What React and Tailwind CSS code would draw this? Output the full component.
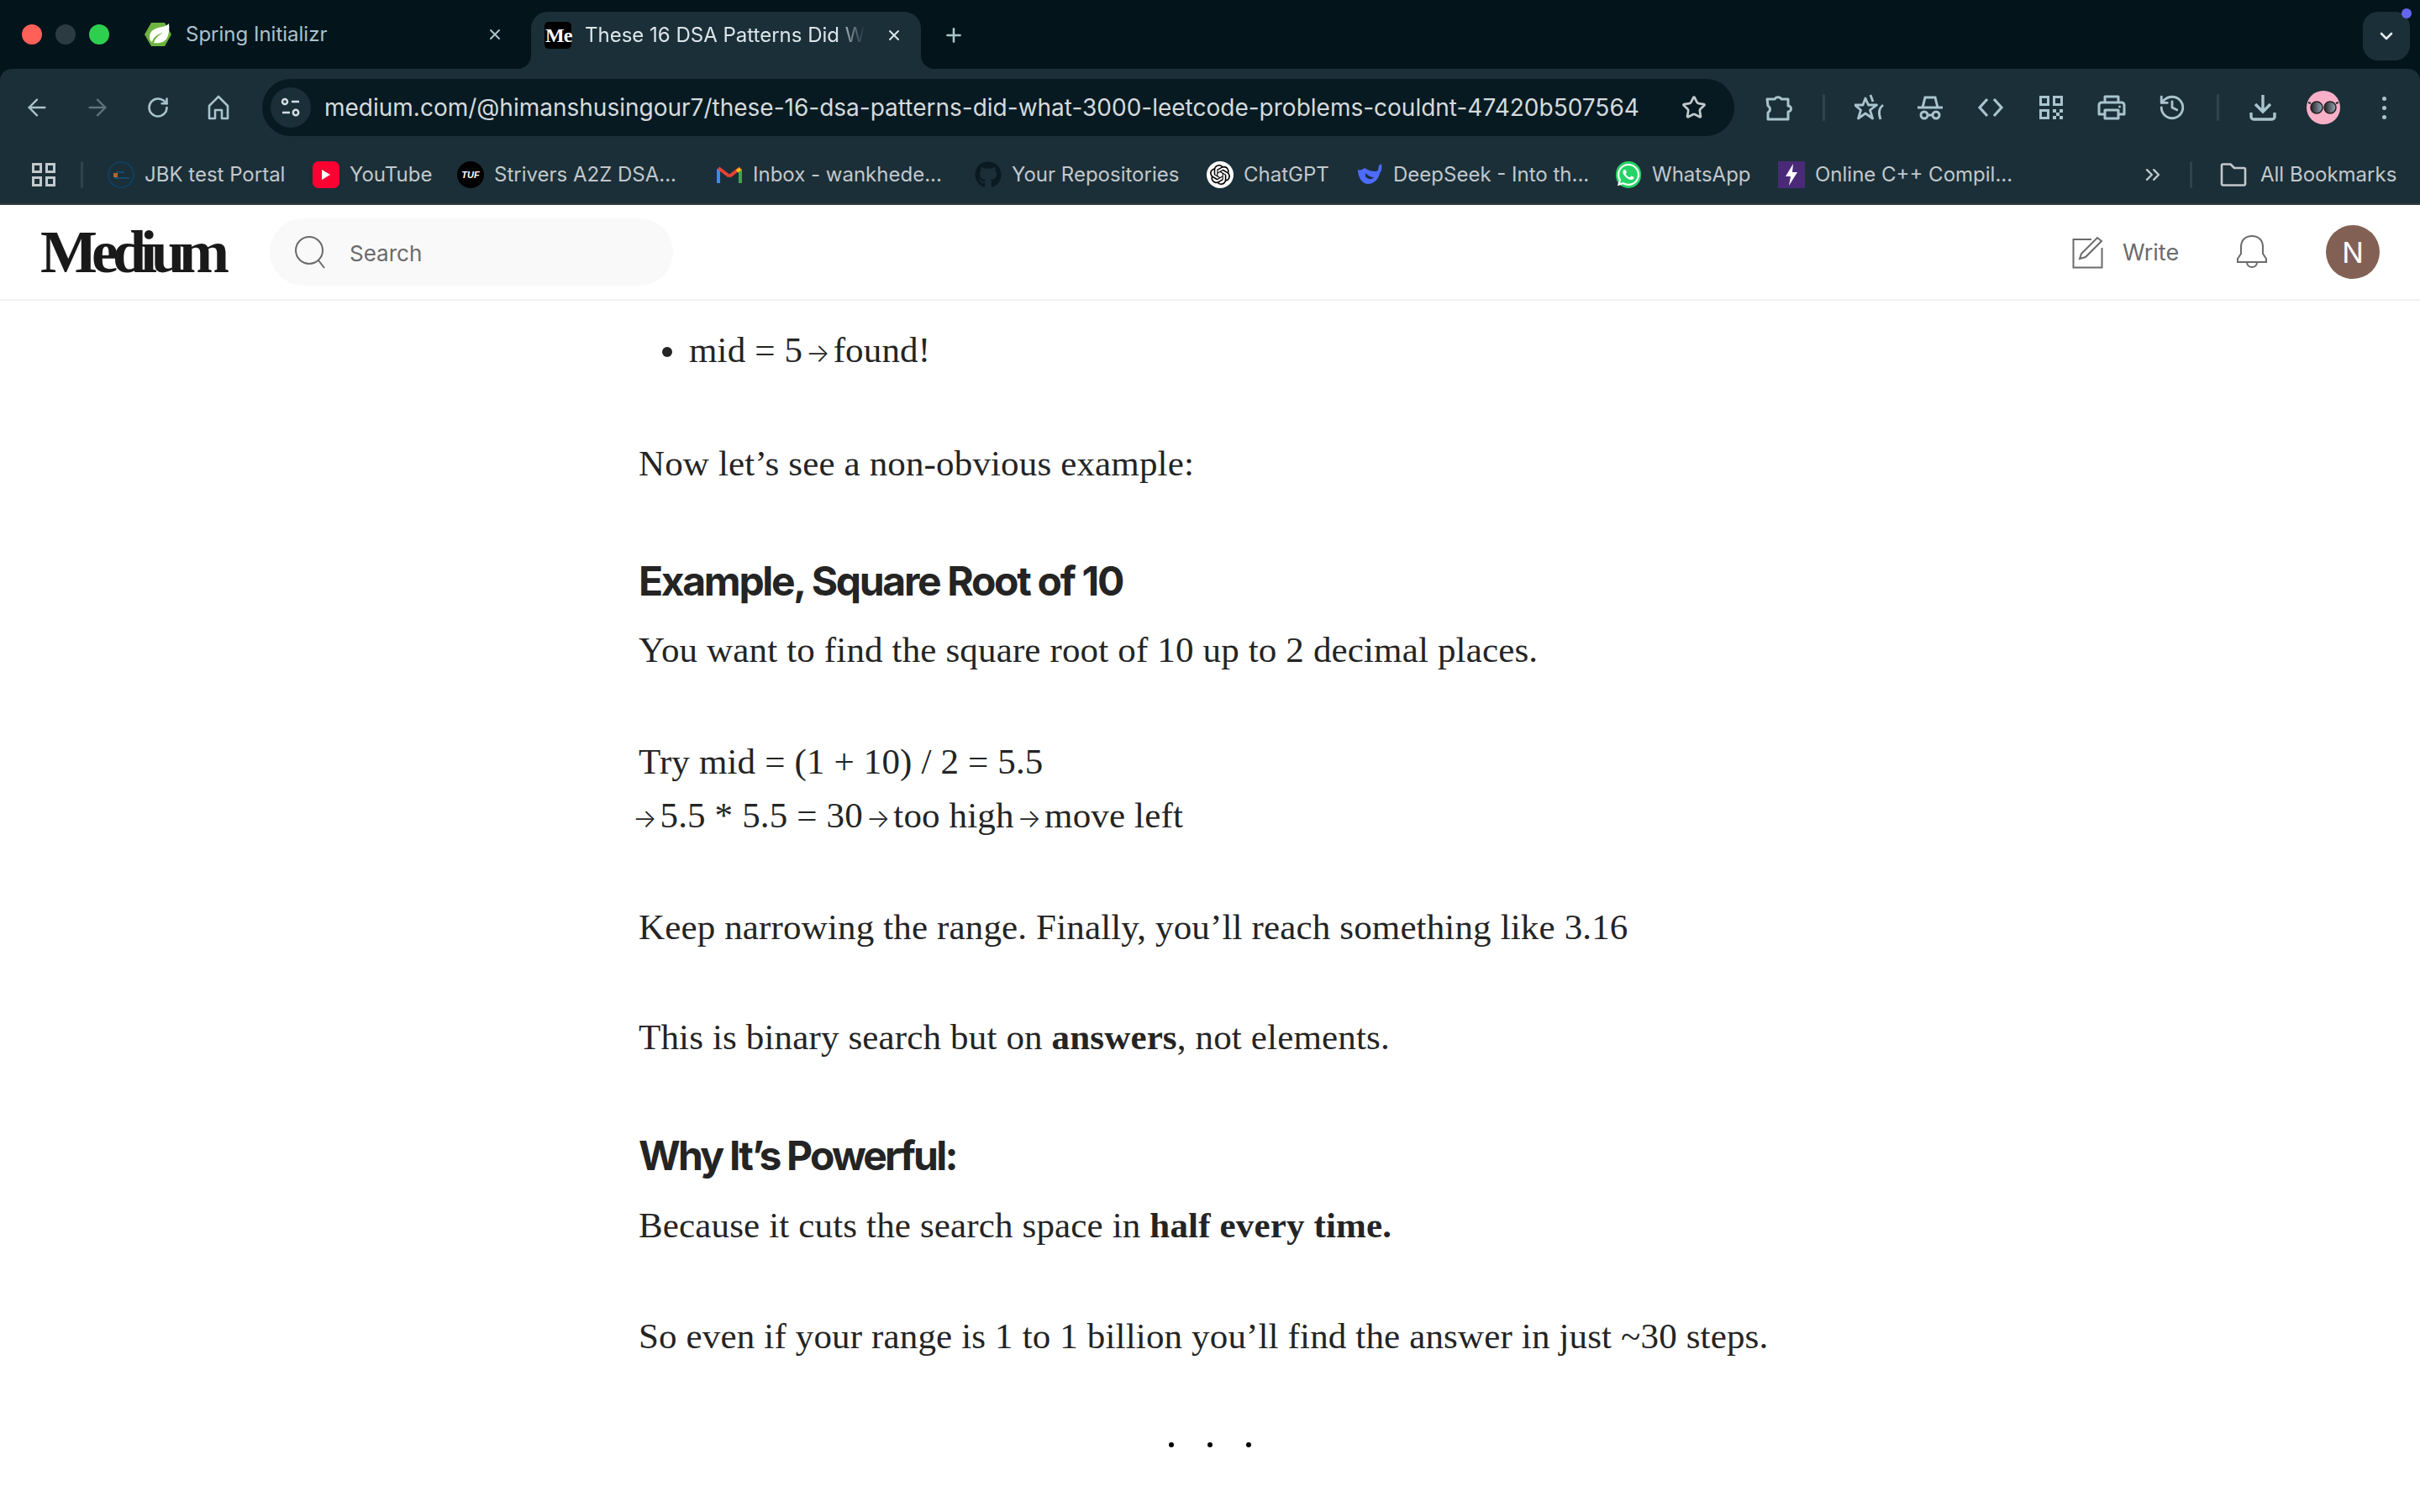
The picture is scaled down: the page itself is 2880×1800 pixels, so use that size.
import React from "react";
import { ArrowLeft, ArrowRight, RotateCw, History, Star, X, Plus, ChevronDown, ChevronsRight } from "lucide-react";
import { FaGithub, FaWhatsapp } from "react-icons/fa";
import { SiOpenai } from "react-icons/si";

const ICON = "#a9c4cc";

function Spring() {
  return (
    <svg width="32" height="30" viewBox="0 0 32 30">
      <path d="M8 1h16l8 14-8 14H8L0 15z" fill="#6db33f" />
      <path d="M29 2c-2 2-4 3-8 4C13 7 6 10 6 18c0 3 1 5 3 6 1-5 6-9 13-11-5 3-9 6-11 12 8 1 13-1 16-6 2-5 3-11 2-17z" fill="#fff" />
    </svg>
  );
}

function MediumFavicon() {
  return (
    <div className="w-[32px] h-[32px] bg-black rounded-[5px] flex items-center pl-[1px] shrink-0">
      <span className="font-['Liberation_Serif',serif] font-bold text-[24px] text-white tracking-[-1px] leading-none">Me</span>
    </div>
  );
}

function SiteSettings() {
  return (
    <svg width="24" height="26" viewBox="0 0 24 26" fill="none" stroke="#d3dde1" strokeWidth="2.5">
      <circle cx="5" cy="6" r="3" />
      <path d="M13 6h9M2 19h9" />
      <circle cx="18" cy="19" r="3.2" />
    </svg>
  );
}

function Home() {
  return (
    <svg width="28" height="30" viewBox="0 0 28 30" fill="none" stroke={ICON} strokeWidth="2.6" strokeLinejoin="round">
      <path d="M3 13 14 2l11 11v15h-7V18h-8v10H3z" />
    </svg>
  );
}

function Puzzle() {
  return (
    <svg width="32" height="32" viewBox="0 0 32 32" fill="none" stroke={ICON} strokeWidth="3" strokeLinejoin="round">
      <path d="M2 6h9a4.5 4 0 0 1 8 0h8v8a3.5 3.5 0 0 1 0 7v9H3v-8a4.5 4.5 0 0 0 0-8z" />
    </svg>
  );
}

function StarCascade() {
  return (
    <svg width="36" height="32" viewBox="0 0 36 32" fill="none" stroke={ICON} strokeWidth="2.8" strokeLinejoin="round">
      <path d="M13 5l3.5 8h10l-8 6 3 10-8.500-6-8.500 6 3-10-7-6h9.500z" />
      <path d="M19 1l3 8M34 13c-4 3-6 9-3 17" />
    </svg>
  );
}

function Incognito() {
  return (
    <svg width="30" height="30" viewBox="0 0 30 30" fill="none" stroke={ICON} strokeWidth="3">
      <path d="M6 15 9 3h12l3 12" />
      <path d="M0 15h30" />
      <circle cx="8" cy="24" r="4" />
      <circle cx="22" cy="24" r="4" />
      <path d="M12 24h6" />
    </svg>
  );
}

function Code() {
  return (
    <svg width="32" height="24" viewBox="0 0 32 24" fill="none" stroke={ICON} strokeWidth="3.2">
      <path d="M12 2 3 12l9 10M20 2l9 10-9 10" />
    </svg>
  );
}

function Qr() {
  return (
    <svg width="28" height="28" viewBox="0 0 28 28" fill="none" stroke={ICON} strokeWidth="3">
      <rect x="1.500" y="1.500" width="9" height="9" />
      <rect x="17.500" y="1.500" width="9" height="9" />
      <rect x="1.500" y="17.500" width="9" height="9" />
      <path d="M16 16h4v4h-4zM24 16h4v4h-4zM20 20h4v4h-4zM16 24h4v4h-4zM24 24h4v4h-4z" fill={ICON} stroke="none" />
    </svg>
  );
}

function Printer() {
  return (
    <svg width="34" height="30" viewBox="0 0 34 30" fill="none" stroke={ICON} strokeWidth="3" strokeLinejoin="round">
      <path d="M9 9V2h16v7" />
      <path d="M8 23H2V12a3 3 0 0 1 3-3h24a3 3 0 0 1 3 3v11h-6" />
      <rect x="9" y="18" width="16" height="10" />
      <circle cx="26.500" cy="14" r="1.500" fill={ICON} stroke="none" />
    </svg>
  );
}

function Download() {
  return (
    <svg width="32" height="32" viewBox="0 0 32 32" fill="none" stroke={ICON} strokeWidth="3.4">
      <path d="M16 1v19M7 12l9 9 9-9" />
      <path d="M2 22v5a3 3 0 0 0 3 3h22a3 3 0 0 0 3-3v-5" />
    </svg>
  );
}

function Shades() {
  return (
    <div className="w-[40px] h-[40px] rounded-full bg-[#f8b0c8] flex items-center justify-center">
      <svg width="36" height="18" viewBox="0 0 36 18">
        <defs>
          <linearGradient id="lens" x1="0" x2="1">
            <stop offset="0" stopColor="#222" />
            <stop offset="1" stopColor="#9ab" />
          </linearGradient>
        </defs>
        <path d="M0 3l3 1M33 4l3-1" stroke="#222" strokeWidth="2" />
        <circle cx="10" cy="9" r="7" fill="url(#lens)" stroke="#222" strokeWidth="1.500" />
        <circle cx="26" cy="9" r="7" fill="url(#lens)" stroke="#222" strokeWidth="1.500" />
      </svg>
    </div>
  );
}

function Dots() {
  return (
    <div className="flex flex-col gap-[6px]">
      <span className="w-[5px] h-[5px] rounded-full bg-[#a9c4cc]" />
      <span className="w-[5px] h-[5px] rounded-full bg-[#a9c4cc]" />
      <span className="w-[5px] h-[5px] rounded-full bg-[#a9c4cc]" />
    </div>
  );
}

function AppsGrid() {
  return (
    <svg width="28" height="28" viewBox="0 0 28 28" fill="none" stroke="#c2c8cb" strokeWidth="3">
      <rect x="1.500" y="1.500" width="9" height="9" />
      <rect x="17.500" y="1.500" width="9" height="9" />
      <rect x="1.500" y="17.500" width="9" height="9" />
      <rect x="17.500" y="17.500" width="9" height="9" />
    </svg>
  );
}

function Jbk() {
  return (
    <svg width="32" height="32" viewBox="0 0 32 32" fill="none">
      <circle cx="16" cy="16" r="15" stroke="#0f3f60" strokeWidth="2" />
      <path d="M10 13h10M8 20h18" stroke="#144a70" strokeWidth="2" />
      <rect x="7" y="14" width="5" height="5" fill="#b5652a" />
    </svg>
  );
}

function YouTube() {
  return (
    <div className="w-[32px] h-[32px] rounded-[7px] bg-[#ff0033] flex items-center justify-center">
      <svg width="12" height="14" viewBox="0 0 12 14"><path d="M1 1l10 6-10 6z" fill="#fff" /></svg>
    </div>
  );
}

function Tuf() {
  return (
    <div className="w-[32px] h-[32px] rounded-full bg-black flex items-center justify-center">
      <span className="font-['Liberation_Sans',sans-serif] italic font-bold text-[11px] text-white leading-none">TUF</span>
    </div>
  );
}

function Gmail() {
  return (
    <svg width="30" height="24" viewBox="0 0 30 24" fill="none">
      <path d="M2 22V5" stroke="#4285f4" strokeWidth="4" />
      <path d="M28 22V5" stroke="#34a853" strokeWidth="4" />
      <path d="M2 4l13 10" stroke="#ea4335" strokeWidth="4" />
      <path d="M15 14 28 4" stroke="#ea4335" strokeWidth="4" />
      <path d="M28 5l-4 3" stroke="#fbbc04" strokeWidth="4" />
    </svg>
  );
}

function DeepSeek() {
  return (
    <svg width="30" height="28" viewBox="0 0 30 28">
      <path d="M1 8c3 1 5 0 8-2 6 4 13 5 16 3l1-6 3-2c1 5 0 9-2 11-1 7-7 13-14 13C6 25 1 17 1 8z" fill="#4d6bfe" />
      <path d="M10 12c3 3 6 5 10 5-2 3-7 3-10-1z" fill="#1b2f38" />
    </svg>
  );
}

function Whatsapp() {
  return (
    <div className="w-[30px] h-[32px] rounded-full bg-[#25d366] flex items-center justify-center">
      <FaWhatsapp size={30} color="#fff" />
    </div>
  );
}

function OnlineCpp() {
  return (
    <div className="w-[32px] h-[32px] bg-[#4a2a78] flex items-center justify-center">
      <svg width="14" height="26" viewBox="0 0 14 26"><path d="M9 0 0 15h6l-2 11 10-16H8z" fill="#fff" /></svg>
    </div>
  );
}

function Folder() {
  return (
    <svg width="32" height="28" viewBox="0 0 32 28" fill="none" stroke="#c2c8cb" strokeWidth="2.6" strokeLinejoin="round">
      <path d="M2 3a1.500 1.500 0 0 1 1.500-1.500h9L17 6h11.500A1.500 1.500 0 0 1 30 7.500V25a1.500 1.500 0 0 1-1.500 1.500h-25A1.500 1.500 0 0 1 2 25z" />
    </svg>
  );
}

function Bookmark({ icon, label, width }) {
  return (
    <div className="flex items-center gap-[12px] shrink-0">
      <div className="w-[32px] h-[32px] flex items-center justify-center">{icon}</div>
      <span className={width}>{label}</span>
    </div>
  );
}

function ToolButton({ children }) {
  return <div className="w-[72px] h-[68px] flex items-center justify-center shrink-0">{children}</div>;
}

function Divider() {
  return <div className="w-[3px] h-[32px] rounded-full bg-[#2f444d] shrink-0" />;
}

function Browser() {
  return (
    <div className="bg-[#04141b] font-['Inter',sans-serif]">
      {/* tab strip */}
      <div className="h-[82px] flex items-start relative">
        <div className="flex gap-[16px] pl-[26px] pt-[29px] w-[172px]">
          <span className="w-[24px] h-[24px] rounded-full bg-[#ff6159]" />
          <span className="w-[24px] h-[24px] rounded-full bg-[#2c3b42]" />
          <span className="w-[24px] h-[24px] rounded-full bg-[#2ecf4e]" />
        </div>
        <div className="w-[460px] h-[82px] flex items-center shrink-0">
          <Spring />
          <span className="ml-[17px] text-[24px] text-[#a9c2cc]">Spring Initializr</span>
          <X size={20} color="#a9c2cc" strokeWidth={2.4} className="ml-[190px]" />
        </div>
        <div className="relative mt-[14px] w-[464px] h-[68px] bg-[#1b2f38] rounded-t-[20px] flex items-center pl-[16px] pb-[12px] shrink-0">
          <svg className="absolute left-[-16px] bottom-0" width="16" height="16" viewBox="0 0 16 16"><path d="M16 0v16H0A16 16 0 0 0 16 0z" fill="#1b2f38" /></svg>
          <svg className="absolute right-[-16px] bottom-0" width="16" height="16" viewBox="0 0 16 16"><path d="M0 0v16h16A16 16 0 0 1 0 0z" fill="#1b2f38" /></svg>
          <MediumFavicon />
          <span className="ml-[16px] w-[333px] whitespace-nowrap text-[24px] text-[#dde6ea] [mask-image:linear-gradient(to_right,black_90%,transparent)]">These 16 DSA Patterns Did W</span>
          <X size={20} color="#dde6ea" strokeWidth={2.4} className="ml-[25px]" />
        </div>
        <Plus size={26} color={ICON} strokeWidth={2.4} className="ml-[26px] mt-[29px]" />
        <div className="absolute right-[12px] top-[14px] w-[56px] h-[58px] rounded-[18px] bg-[#1b2f38] flex items-center justify-center">
          <ChevronDown size={24} color="#e3eaed" strokeWidth={2.6} />
          <span className="absolute right-[-2px] top-[-4px] w-[12px] h-[12px] rounded-full bg-[#6366f1]" />
        </div>
      </div>
      {/* toolbar */}
      <div className="bg-[#1b2f38] rounded-t-[14px]">
        <div className="flex items-center pt-[12px] pl-[8px] pr-[8px]">
          <ToolButton><ArrowLeft size={32} color={ICON} strokeWidth={1.8} /></ToolButton>
          <ToolButton><ArrowRight size={32} color="#5d737c" strokeWidth={1.8} /></ToolButton>
          <ToolButton><RotateCw size={28} color={ICON} strokeWidth={2.2} /></ToolButton>
          <ToolButton><Home /></ToolButton>
          <div className="w-[1752px] h-[68px] ml-[16px] rounded-full bg-[#071a22] flex items-center pl-[10px] shrink-0">
            <div className="w-[48px] h-[48px] rounded-full bg-[#1b2f38] flex items-center justify-center"><SiteSettings /></div>
            <span className="ml-[16px] text-[28px] text-[#d5dadd] whitespace-nowrap">medium.com/@himanshusingour7/these-16-dsa-patterns-did-what-3000-leetcode-problems-couldnt-47420b507564</span>
            <Star size={30} color="#c2c8cb" strokeWidth={2.2} className="ml-[50px]" />
          </div>
          <div className="ml-[17px]"><ToolButton><Puzzle /></ToolButton></div>
          <div className="ml-[16px] mr-[17px]"><Divider /></div>
          <ToolButton><StarCascade /></ToolButton>
          <ToolButton><Incognito /></ToolButton>
          <ToolButton><Code /></ToolButton>
          <ToolButton><Qr /></ToolButton>
          <ToolButton><Printer /></ToolButton>
          <ToolButton><History size={34} color={ICON} strokeWidth={2} /></ToolButton>
          <div className="ml-[17px] mr-[16px]"><Divider /></div>
          <ToolButton><Download /></ToolButton>
          <ToolButton><Shades /></ToolButton>
          <ToolButton><Dots /></ToolButton>
        </div>
        {/* bookmarks */}
        <div className="flex items-center h-[80px] pl-[38px] pt-[12px] text-[24px] text-[#c2c8cb] whitespace-nowrap">
          <AppsGrid />
          <div className="ml-[30px] mr-[29px]"><Divider /></div>
          <div className="flex items-center gap-[32px]">
            <Bookmark icon={<Jbk />} label="JBK test Portal" width="w-[168px]" />
            <Bookmark icon={<YouTube />} label="YouTube" width="w-[96px]" />
            <Bookmark icon={<Tuf />} label="Strivers A2Z DSA..." width="w-[232px]" />
            <Bookmark icon={<Gmail />} label="Inbox - wankhede..." width="w-[232px]" />
            <Bookmark icon={<FaGithub size={32} color="#0b1a20" />} label="Your Repositories" width="w-[200px]" />
            <Bookmark icon={<div className="w-[32px] h-[32px] rounded-full bg-white flex items-center justify-center"><SiOpenai size={24} color="#000" /></div>} label="ChatGPT" width="w-[102px]" />
            <Bookmark icon={<DeepSeek />} label="DeepSeek - Into th..." width="w-[232px]" />
            <Bookmark icon={<Whatsapp />} label="WhatsApp" width="w-[118px]" />
            <Bookmark icon={<OnlineCpp />} label="Online C++ Compil..." width="w-[232px]" />
          </div>
          <ChevronsRight size={28} color="#c2c8cb" strokeWidth={2} className="ml-[156px]" />
          <div className="ml-[30px] mr-[33px]"><Divider /></div>
          <Folder />
          <span className="ml-[16px]">All Bookmarks</span>
        </div>
      </div>
      <div className="h-[2px] bg-[#333a3d]" />
    </div>
  );
}

function MediumHeader() {
  return (
    <header className="h-[114px] bg-white border-b-2 border-[#f2f2f2] flex items-center pl-[48px] pr-[48px] font-['Inter',sans-serif]">
      <span className="font-['Liberation_Serif',serif] font-bold text-[72px] leading-none tracking-[-7px] text-[#191919] w-[273px]">Medium</span>
      <div className="w-[480px] h-[80px] rounded-full bg-[#f9f9f9] flex items-center pl-[29px]">
        <svg width="38" height="40" viewBox="0 0 38 40" fill="none" stroke="#6b6b6b" strokeWidth="2">
          <circle cx="18" cy="18" r="16" />
          <path d="M29 30l7 9" />
        </svg>
        <span className="ml-[28px] pt-[2px] text-[26px] text-[#6b6b6b]">Search</span>
      </div>
      <div className="ml-auto flex items-center">
        <svg width="38" height="40" viewBox="0 0 38 40" fill="none" stroke="#6b6b6b" strokeWidth="2">
          <path d="M23 5H1.500v33.500h34V15" />
          <path d="M9 28l2-6L30 3l5 4-19 19z" />
        </svg>
        <span className="ml-[22px] pt-[2px] w-[66px] text-[27px] text-[#6b6b6b]">Write</span>
        <svg className="ml-[69px]" width="38" height="42" viewBox="0 0 38 42" fill="none" stroke="#6b6b6b" strokeWidth="2">
          <path d="M2 33v-4l4-6V15C6 7 11 2 19 2s13 5 13 13v8l4 6v4z" />
          <path d="M13 33c0 8 12 8 12 0" />
        </svg>
        <div className="ml-[69px] w-[64px] h-[64px] rounded-full bg-[#826154] flex items-center justify-center text-[34px] text-white">N</div>
      </div>
    </header>
  );
}

// the article font's arrow is much narrower than the one in Liberation Serif
function Arrow() {
  return <span className="font-['Inter',sans-serif] font-light text-[30px] mx-[-7px] tracking-normal">→</span>;
}

function Article() {
  return (
    <main className="pl-[760px] pt-[27px] font-['Liberation_Serif',serif] text-[43px] tracking-[0.15px] leading-[64px] text-[#242424] whitespace-nowrap">
      <ul className="pl-[60px] flex items-center">
        <li className="relative">
          <span className="absolute left-[-32px] top-[28px] w-[12px] h-[12px] rounded-full bg-[#242424]" />
          mid = 5 <Arrow /> found!
        </li>
      </ul>
      <p className="mt-[68px]">Now let’s see a non-obvious example:</p>
      <h2 className="mt-[78px] h-[60px] font-['Inter',sans-serif] font-bold text-[48px] leading-[60px] tracking-[-2.3px]">Example, Square Root of 10</h2>
      <p className="mt-[20px]">You want to find the square root of 10 up to 2 decimal places.</p>
      <p className="mt-[69px]">Try mid = (1 + 10) / 2 = 5.5</p>
      <p><Arrow /> 5.5 * 5.5 = 30 <Arrow /> too high <Arrow /> move left</p>
      <p className="mt-[66px]">Keep narrowing the range. Finally, you’ll reach something like 3.16</p>
      <p className="mt-[67px]">This is binary search but on <b>answers</b>, not elements.</p>
      <h2 className="mt-[79px] h-[60px] font-['Inter',sans-serif] font-bold text-[48px] leading-[60px] tracking-[-2.8px]">Why It’s Powerful:</h2>
      <p className="mt-[21px]">Because it cuts the search space in <b>half every time.</b></p>
      <p className="mt-[68px]">So even if your range is 1 to 1 billion you’ll find the answer in just ~30 steps.</p>
      <div className="mt-[94px] ml-[631px] flex gap-[40px]">
        <span className="w-[6px] h-[6px] rounded-full bg-black" />
        <span className="w-[6px] h-[6px] rounded-full bg-black" />
        <span className="w-[6px] h-[6px] rounded-full bg-black" />
      </div>
    </main>
  );
}

export default function App() {
  return (
    <div className="h-[1800px] overflow-hidden bg-white">
      <Browser />
      <MediumHeader />
      <Article />
    </div>
  );
}
